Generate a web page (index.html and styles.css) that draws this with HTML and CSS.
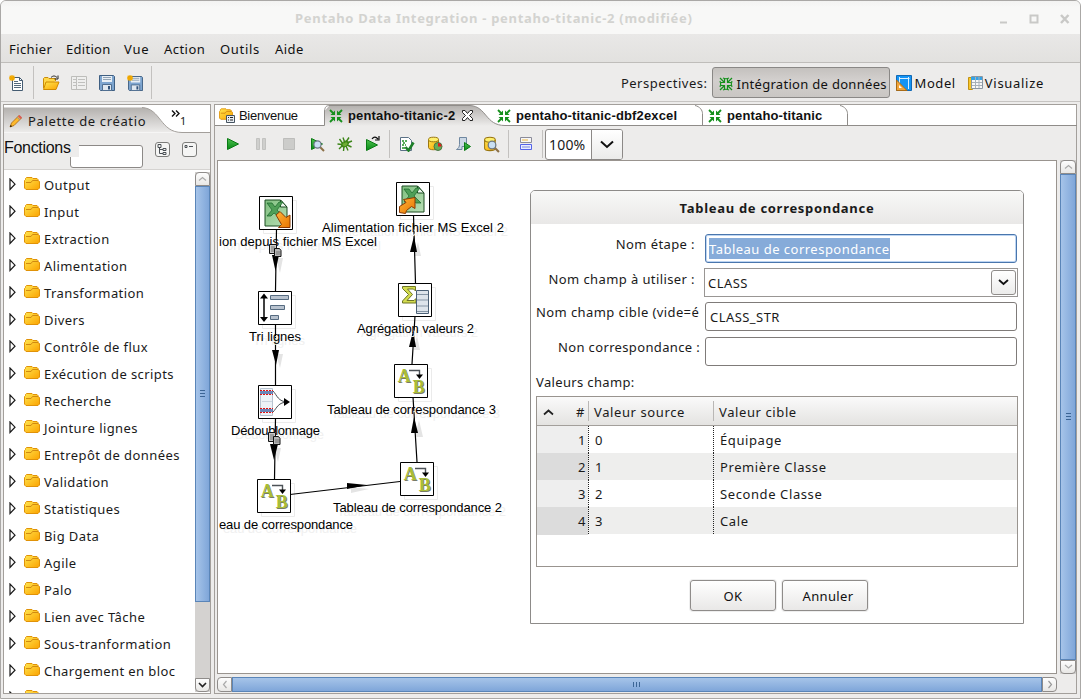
FILE: index.html
```html
<!DOCTYPE html>
<html lang="fr">
<head>
<meta charset="utf-8">
<title>Pentaho Data Integration</title>
<link rel="stylesheet" href="styles.css">
</head>
<body>
<svg class="defs" width="0" height="0">
  <defs>
    <linearGradient id="gold" x1="0" y1="0" x2="1" y2="1"><stop offset="0" stop-color="#ffe650"/><stop offset="1" stop-color="#fba300"/></linearGradient>
    <linearGradient id="play" x1="0" y1="0" x2="0" y2="1"><stop offset="0" stop-color="#4fc04f"/><stop offset="1" stop-color="#058a15"/></linearGradient>
    <linearGradient id="tabfill" x1="0" y1="0" x2="0" y2="1"><stop offset="0" stop-color="#b3b0ad"/><stop offset="1" stop-color="#edeceb"/></linearGradient>
    <linearGradient id="xls" x1="0" y1="0" x2="1" y2="1"><stop offset="0" stop-color="#7fbf7f"/><stop offset="1" stop-color="#b9dfb5"/></linearGradient>
    <linearGradient id="orange" x1="0" y1="0" x2="1" y2="1"><stop offset="0" stop-color="#ffb43a"/><stop offset="1" stop-color="#e87500"/></linearGradient>
    <symbol id="folder" viewBox="0 0 16 14"><path d="M.5 3.500V11l1.500 1.500h12l1.500-1.500V4.500L14 3.500V2.500L13 1.500H9L8 .5H2.500L1.500 1.500v1z" fill="url(#gold)" stroke="#e09208"/><path d="M2 5.500h5l1.500-2H14" fill="none" stroke="#d18a10"/></symbol>
    <symbol id="tri" viewBox="0 0 7 13"><path d="M1 1v10.500L6 6.200z" fill="#fff" stroke="#1a1a1a" stroke-width="1.200"/></symbol>
    <symbol id="run" viewBox="0 0 16 16"><path d="M2.500 2.500l11 5.500-11 5.500z" fill="url(#play)" stroke="#0a7a14"/></symbol>
    <symbol id="trans" viewBox="0 0 14 14"><path d="M1 1l4 4M13 1L9 5M1 13l4-4M13 13L9 9" stroke="#15901c" stroke-width="1.800"/><path d="M6 1.500V6H1.500zM8 1.500V6h4.500zM6 12.500V8H1.500zM8 12.500V8h4.500z" fill="#15901c"/></symbol>
    <symbol id="floppy" viewBox="0 0 16 16"><path d="M.5.5h14l1 1v14h-14l-1-1z" fill="#7ea5cf" stroke="#3f5f82"/><path d="M3 1h10v6H3z" fill="#e9eff5"/><path d="M4 2.500h8M4 4.500h8" stroke="#92a4b5"/><path d="M3.500 9.500h9v6h-9z" fill="#dfe7ef" stroke="#506e90"/><path d="M9 11h2v3.500H9z" fill="#315279"/></symbol>
    <symbol id="star" viewBox="0 0 6 6"><path d="M3 0v6M0 3h6M.7.700l4.600 4.600M5.300.7L.7 5.300" stroke="#f2a900" stroke-width="1.300"/></symbol>
    <symbol id="lens" viewBox="0 0 16 16"><path d="M11 11l4 4" stroke="#8c7046" stroke-width="2"/><circle cx="8.500" cy="8.500" r="3.600" fill="#c9dff3" stroke="#6c7885" stroke-width="1.200"/></symbol>
    <symbol id="db" viewBox="0 0 16 16"><path d="M1.500 3.500v8c0 3 10 3 10 0v-8" fill="url(#gold)" stroke="#9b7711"/><ellipse cx="6.500" cy="3.500" rx="5" ry="2.300" fill="#fff06c" stroke="#9b7711"/></symbol>
    <symbol id="map" viewBox="0 0 34 34"><path d="M.5.5h33v33H.5z" fill="#fff" stroke="#000"/><path d="M15 6.500h10.500V13" fill="none" stroke="#4c5257" stroke-width="1.400"/><path d="M22 10.500h7L25.500 15z"/><g font-family="Liberation Serif, serif" font-weight="bold" font-size="18"><text x="4.500" y="18.500" fill="#777b66">A</text><text x="19.500" y="30" fill="#777b66">B</text><text x="3.800" y="17.800" fill="#a9bd36">A</text><text x="18.800" y="29.300" fill="#a9bd36">B</text></g></symbol>
    <symbol id="excel" viewBox="0 0 24 28"><path d="M1 1h15.500l6.500 7v19H1z" fill="url(#xls)" stroke="#1d4c22"/><path d="M16.500 1v7H23z" fill="#eef6ee" stroke="#1d4c22"/><path d="M3 4h5l3 4 4-5h4l-6 8 7 7h-5l-5-4-3 3H3l5-6z" fill="#4f9f57" stroke="#19652a" stroke-width=".7"/></symbol>
    <symbol id="copy" viewBox="0 0 13 13"><path d="M.5.5h7v9h-7z" fill="#c9c9c9" stroke="#111"/><path d="M2 3h4M2 5h4M2 7h4" stroke="#777"/><path d="M5.500 4.500h5l1.500 2v6H5.500z" fill="#b7b7b7" stroke="#111"/><path d="M7 8h4M7 10h4" stroke="#777"/></symbol>
  </defs>
</svg>

<div class="window">
  <header class="titlebar">
    <span class="title">Pentaho Data Integration - pentaho-titanic-2 (modifiée)</span>
    <svg class="winctl" width="76" height="14" viewBox="0 0 76 14" fill="none" stroke="#c9c9c7"><path d="M1 10.500h7" stroke-width="2"/><path d="M31.500 3.500h7v7h-7z" stroke-width="2"/><path d="M62 3l7.500 8M69.500 3L62 11" stroke-width="2.500"/></svg>
  </header>

  <nav class="menubar">
    <span class="m1">Fichier</span><span class="m2">Edition</span><span class="m3">Vue</span><span class="m4">Action</span><span class="m5">Outils</span><span class="m6">Aide</span>
  </nav>

  <div class="toolbar">
    <svg class="ic new" width="16" height="16" viewBox="0 0 16 16"><path d="M3.500 2.500h7l3 3v10h-10z" fill="#fff" stroke="#455c72"/><path d="M10.500 2.500v3h3" fill="none" stroke="#455c72"/><path d="M5 6.500h4M5 8.500h7M5 10.500h7M5 12.500h7" stroke="#54697c"/><use href="#star" width="6" height="6"/></svg>
    <i class="sep"></i>
    <svg class="ic open" width="18" height="16" viewBox="0 0 18 16"><path d="M1.500 13V3.500l1-1H6l1 1h6.500V6" fill="#ffd84a" stroke="#c98c0c"/><path d="M1.500 14.500L4 7h13l-3 7.500z" fill="url(#gold)" stroke="#d08a00"/><path d="M9 2.500c2-2 4-2 6 0M16 .5v3.500h-3.500" fill="none" stroke="#222"/></svg>
    <svg class="ic" width="16" height="16" viewBox="0 0 16 16"><path d="M.5 1.500h15v13H.5z" fill="#efefee" stroke="#bdbdba"/><path d="M2 4.500h3M2 7.500h3M2 10.500h3M7 4.500h7M7 7.500h7M7 10.500h7M5.500 2v12" stroke="#c0c0be"/></svg>
    <svg class="ic" width="16" height="16"><use href="#floppy"/></svg>
    <svg class="ic" width="16" height="16" viewBox="0 0 16 16"><use href="#floppy" x="1" y="1" width="15" height="15"/><use href="#star" width="6" height="6"/></svg>
    <i class="sep last"></i>
    <span class="grow"></span>
    <span class="persp-label">Perspectives:</span>
    <button class="persp on"><svg width="14" height="14" viewBox="0 0 14 14" fill="none" stroke="#15901c" stroke-width="1.200"><path d="M1 1l4 4M13 1L9 5M1 13l4-4M13 13L9 9M5.500 2v3.500H2M8.500 2v3.500H12M5.500 12V8.500H2M8.500 12V8.500H12M1 4c1 2 1 4 0 6M13 4c-1 2-1 4 0 6M4 1c2 1 4 1 6 0M4 13c2-1 4-1 6 0"/></svg><span>Intégration de données</span></button>
    <span class="persp model"><svg width="16" height="16" viewBox="0 0 16 16"><path d="M.5.5h15v15H.5z" fill="#1494f5" stroke="#1269b4"/><path d="M3 3.500h10.500M3.500 2v12M12.500 2v12" stroke="#d9efff"/><path d="M.5 5v10.500H11z" fill="#f2a53b" stroke="#a96b17"/><path d="M3 10v3h3z" fill="#fff"/></svg>Model</span>
    <span class="persp visu"><svg width="15" height="14" viewBox="0 0 15 14"><path d="M.5 1.500h4v12h-4z" fill="#f8c62a" stroke="#c29212"/><path d="M3.500.5h11v12h-11z" fill="#f7f7f7" stroke="#8b97a2"/><path d="M3 1h11v3H3z" fill="#35a3e6"/><path d="M4 6.500h10M4 9.500h10M7.500 1v11M11 1v11" stroke="#a7b0b8"/></svg>Visualize</span>
  </div>

  <main class="work">
    <section class="palette">
      <div class="ptabs">
        <svg class="shape" width="206" height="28" viewBox="0 0 206 28"><path d="M0 27.500V2.500h138C157 3.500 156 27.500 178 27.500z" fill="url(#tabfill)"/><path d="M138 2.500C157 3.500 156 27.500 178 27.500H206" fill="none" stroke="#a39f9b"/></svg>
        <svg class="pencil" width="14" height="14" viewBox="0 0 14 14"><path d="M1 13l1.500-4L10 1.500 12.500 4 5 11.500z" fill="#fdb92c" stroke="#a8660f" stroke-width=".8"/><path d="M9 2.500l1.500-1.500L13 3.500 11.500 5z" fill="#d95b5b"/><path d="M8.200 3.300l2.500 2.500" stroke="#7d8fb5"/><path d="M1 13l.8-2 1.200 1.200z"/></svg>
        <span class="pname">Palette de créatio</span>
        <svg class="more" width="9" height="8" viewBox="0 0 9 8" fill="none" stroke="#111" stroke-width="1.400"><path d="M1 .5l3 3-3 3M5 .5l3 3-3 3"/></svg><span class="one">1</span>
      </div>
      <div class="pfilter">
        <span class="flabel">Fonctions</span>
        <span class="finput"></span>
        <svg class="tbtn a" width="15" height="15" viewBox="0 0 15 15" fill="none" stroke="#7c7c7a"><rect x=".5" y=".5" width="14" height="14" rx="2.500" fill="#f5f5f4"/><path d="M3 2.500h3v3H3zM8 6.500h3v2H8zM8 10.500h3v2H8zM4.500 6v5.500H8M4.500 7.500H8" stroke="#4b5055"/></svg>
        <svg class="tbtn" width="15" height="15" viewBox="0 0 15 15" fill="none" stroke="#7c7c7a"><rect x=".5" y=".5" width="14" height="14" rx="2.500" fill="#f5f5f4"/><path d="M3 3.500h2v2H3zM7 4.500h4" stroke="#4b5055"/></svg>
      </div>
      <div class="ptree">
        <ul class="tree">
          <li><svg class="tw"><use href="#tri"/></svg><svg class="fo"><use href="#folder"/></svg>Output</li>
          <li><svg class="tw"><use href="#tri"/></svg><svg class="fo"><use href="#folder"/></svg>Input</li>
          <li><svg class="tw"><use href="#tri"/></svg><svg class="fo"><use href="#folder"/></svg>Extraction</li>
          <li><svg class="tw"><use href="#tri"/></svg><svg class="fo"><use href="#folder"/></svg>Alimentation</li>
          <li><svg class="tw"><use href="#tri"/></svg><svg class="fo"><use href="#folder"/></svg>Transformation</li>
          <li><svg class="tw"><use href="#tri"/></svg><svg class="fo"><use href="#folder"/></svg>Divers</li>
          <li><svg class="tw"><use href="#tri"/></svg><svg class="fo"><use href="#folder"/></svg>Contrôle de flux</li>
          <li><svg class="tw"><use href="#tri"/></svg><svg class="fo"><use href="#folder"/></svg>Exécution de scripts</li>
          <li><svg class="tw"><use href="#tri"/></svg><svg class="fo"><use href="#folder"/></svg>Recherche</li>
          <li><svg class="tw"><use href="#tri"/></svg><svg class="fo"><use href="#folder"/></svg>Jointure lignes</li>
          <li><svg class="tw"><use href="#tri"/></svg><svg class="fo"><use href="#folder"/></svg>Entrepôt de données</li>
          <li><svg class="tw"><use href="#tri"/></svg><svg class="fo"><use href="#folder"/></svg>Validation</li>
          <li><svg class="tw"><use href="#tri"/></svg><svg class="fo"><use href="#folder"/></svg>Statistiques</li>
          <li><svg class="tw"><use href="#tri"/></svg><svg class="fo"><use href="#folder"/></svg>Big Data</li>
          <li><svg class="tw"><use href="#tri"/></svg><svg class="fo"><use href="#folder"/></svg>Agile</li>
          <li><svg class="tw"><use href="#tri"/></svg><svg class="fo"><use href="#folder"/></svg>Palo</li>
          <li><svg class="tw"><use href="#tri"/></svg><svg class="fo"><use href="#folder"/></svg>Lien avec Tâche</li>
          <li><svg class="tw"><use href="#tri"/></svg><svg class="fo"><use href="#folder"/></svg>Sous-tranformation</li>
          <li><svg class="tw"><use href="#tri"/></svg><svg class="fo"><use href="#folder"/></svg>Chargement en bloc</li>
          <li><svg class="tw"><use href="#tri"/></svg><svg class="fo"><use href="#folder"/></svg>Petits</li>
        </ul>
        <div class="vscroll">
          <span class="arrow"><svg width="9" height="6" viewBox="0 0 9 6" fill="none" stroke="#aaa" stroke-width="1.200"><path d="M1 4.500l3.500-3 3.500 3"/></svg></span>
          <span class="thumb"><svg width="5" height="8" viewBox="0 0 5 8" stroke="#3c6595"><path d="M0 .5h5M0 3.500h5M0 6.500h5"/></svg></span>
          <span class="arrow end"><svg width="9" height="6" viewBox="0 0 9 6" fill="none" stroke="#222" stroke-width="1.600"><path d="M1 1l3.500 3.500L8 1"/></svg></span>
        </div>
      </div>
    </section>

    <section class="editor">
      <div class="etabs">
        <svg class="shape" width="862" height="21" viewBox="0 0 862 21"><path d="M109.500 21V6l5-5.500H255C272 1.500 270 20.500 290 20.500V21z" fill="url(#tabfill)"/><g fill="none" stroke="#8f8c89"><path d="M0 20.500h109.500V6C110 2 111 .5 115 .5H255C272 1.500 270 20.500 290 20.500H862"/><path d="M480 .5c5 1 7.500 5 7.500 8v12M625 .5c5 1 7.500 5 7.500 8v12"/></g></svg>
        <span class="tab t1"><svg width="16" height="16" viewBox="0 0 16 16"><use href="#folder" width="14" height="13"/><path d="M7.500 7.500h8v7h-8z" fill="#e8eef4" stroke="#44525f"/><path d="M9 9.500h1M9 12h1M11 9.500h3M11 12h3" stroke="#222"/></svg><span>Bienvenue</span></span>
        <span class="tab t2"><svg width="14" height="14"><use href="#trans"/></svg><b>pentaho-titanic-2</b><svg class="close" width="11" height="11" viewBox="0 0 11 11"><path d="M.5.5h2.500l2.500 3 2.500-3h2.500v2l-3 3 3 3v2H8l-2.500-3-2.500 3H.5v-2l3-3-3-3z" fill="#fff" stroke="#222"/></svg></span>
        <span class="tab t3"><svg width="14" height="14"><use href="#trans"/></svg><b>pentaho-titanic-dbf2excel</b></span>
        <span class="tab t4"><svg width="14" height="14"><use href="#trans"/></svg><b>pentaho-titanic</b></span>
      </div>
      <div class="ebar">
        <svg width="16" height="16"><use href="#run"/></svg>
        <svg width="16" height="16" viewBox="0 0 16 16"><path d="M3.500 2.500h3v11h-3zM9.500 2.500h3v11h-3z" fill="#cfcfcd" stroke="#c2c2c0"/></svg>
        <svg width="16" height="16" viewBox="0 0 16 16"><path d="M2.500 2.500h11v11h-11z" fill="#ccccca" stroke="#bdbdbb"/></svg>
        <svg width="16" height="16" viewBox="0 0 16 16"><path d="M2.500 2.500l11 5.500-11 5.500z" fill="url(#play)" stroke="#0a7a14"/><use href="#lens"/></svg>
        <svg width="16" height="16" viewBox="0 0 16 16"><ellipse cx="8" cy="8" rx="4" ry="2.600" transform="rotate(-35 8 8)" fill="#6fae34" stroke="#33750f" stroke-width=".7"/><path d="M6 8L2.500 3M8 7L6 1.500M9 6l3-4.500M10 7l5-2M10 9l4.500 2M9 10l2 4.500M7 10l-.5 5M6 9l-4 4M5 8.500L.5 8" fill="none" stroke="#3d8518" stroke-width="1.400"/></svg>
        <svg width="16" height="16" viewBox="0 0 16 16"><path d="M1.500 3.500l11 5.500-11 5.500z" fill="url(#play)" stroke="#0a7a14"/><path d="M7 3c2-3 4-2 6 0M14 0v4h-4" fill="none" stroke="#111" stroke-width="1.200"/></svg>
        <i class="sep"></i>
        <svg width="16" height="16" viewBox="0 0 16 16"><path d="M1.500 1.500h8l3 3v10h-11z" fill="#fff" stroke="#5b7186"/><path d="M3 5h2M6 5h2M4 7h2M3 9h2M6 9h1M3 12h3" stroke="#259325" stroke-width="1.500"/><path d="M6.500 11l3 3.500 5-8" fill="none" stroke="#1d7f28" stroke-width="2.600"/></svg>
        <svg width="16" height="16" viewBox="0 0 16 16"><use href="#db"/><circle cx="11" cy="10.500" r="4" fill="#68ae5b" stroke="#497542"/><path d="M11 10.500V7a3.500 3.500 0 0 1 3.500 3.500z" fill="#e21d1d"/></svg>
        <svg width="16" height="16" viewBox="0 0 16 16"><path d="M4.500 1.500h7v9H7v3H1.500c2-1 3-3 3-5z" fill="#ccd8e5" stroke="#6f87a0"/><path d="M9.500 6.500l6 4-6 4z" fill="url(#play)" stroke="#0a7a14"/></svg>
        <svg width="17" height="17" viewBox="0 0 16 16"><use href="#db"/><use href="#lens"/></svg>
        <i class="sep"></i>
        <svg width="16" height="16" viewBox="0 0 16 16"><path d="M2.500 1.500h11v5h-11z" fill="#f7f7f7" stroke="#8b8b99"/><path d="M4 4h6" stroke="#eeb73c"/><path d="M2.500 8.500h11v5h-11z" fill="#e8ecff" stroke="#5563e8"/><path d="M4 11h8" stroke="#7b87dd"/></svg>
        <i class="sep"></i>
        <span class="zoom"><span class="zval">100%</span><span class="zbtn"><svg width="14" height="9" viewBox="0 0 14 9" fill="none" stroke="#111" stroke-width="2"><path d="M1 1.500l6 5.500 6-5.500"/></svg></span></span>
      </div>
      <div class="egrid">
        <div class="canvas">
          <svg class="graph" width="838" height="512" viewBox="218 161 838 512">
            <path class="shadow" transform="translate(4 4)" d="M259.500 196.500h33v33h-33zM258.500 291.500h33v33h-33zM258.500 385.500h33v33h-33zM257.500 479.500h33v33h-33zM396.500 182.500h33v33h-33zM398.500 283.500h33v33h-33zM394.500 364.500h33v33h-33zM400.500 462.500h33v33h-33z"/>
            <path class="wedge" transform="translate(4 4)" d="M272 254h7l-3 15zM272 350h7l-3 14zM270 444h7l-3 14zM347 483v6l18-4zM410 252h7l-3-14zM409 346h7l-3-14zM411 433h8l-4-17z"/>
            <g class="hop"><path d="M276.500 229l-1 62M275.500 324v61M275.500 418l-1 61M290 494.500L400 481.500M417 462l-4-65M412 364l3-48M415.500 283l-2-68"/></g>
            <path d="M272 255h7l-3.500 16zM272 350h7l-3 15zM270 444h8l-4 16zM347 483v6l20-4zM410 252h7l-3-16zM409 347h7l-3-16zM411 433h7l-4-16z"/>
            <g class="lbl"><text x="219" y="246" textLength="158">ion depuis fichier MS Excel</text><text x="249" y="341" textLength="52">Tri lignes</text><text x="231" y="435" textLength="89">Dédoublonnage</text><text x="219" y="529" textLength="134">eau de correspondance</text><text x="322" y="232" textLength="182">Alimentation fichier MS Excel 2</text><text x="357" y="333" textLength="117">Agrégation valeurs 2</text><text x="327" y="414" textLength="169">Tableau de correspondance 3</text><text x="333" y="512" textLength="169">Tableau de correspondance 2</text></g>
            <use href="#copy" x="269" y="244" width="13" height="13"/><use href="#copy" x="268" y="432" width="13" height="13"/>
            <path class="node" d="M259.500 196.500h33v33h-33zM258.500 291.500h33v33h-33zM258.500 385.500h33v33h-33zM396.500 182.500h33v33h-33zM398.500 283.500h33v33h-33z"/>
            <use href="#map" x="257" y="479" width="34" height="34"/><use href="#map" x="400" y="462" width="34" height="34"/><use href="#map" x="394" y="364" width="34" height="34"/>
            <use href="#excel" x="264" y="199" width="24" height="28"/><path d="M276 215l4-3.500 6 6 4-2.500v12.500H278.500l3-3z" fill="url(#orange)" stroke="#8a3a05"/>
            <use href="#excel" x="401" y="185" width="24" height="28"/><path d="M403.500 199.500l11.500-2v11l-3.500-2-5 4-1 3-6-1v-6l6.500-4z" fill="url(#orange)" stroke="#8a3a05"/>
            <g><path d="M264 297v22" stroke="#000" stroke-width="1.500"/><path d="M260 298.500h8l-4-5zM260 317h8l-4 5z"/><path d="M270.500 295.500h18v4h-18zM270.500 305.500h14v4h-14zM270.500 315.500h8v4h-8z" fill="#b9c3cf" stroke="#566b80"/></g>
            <g fill="none"><path d="M260.500 388.500h12v27h-12z" fill="#edf2f7" stroke="#b7c3d0"/><path d="M260 392.500h13M260 410.500h13" stroke="#6a86b8" stroke-width="3"/><path d="M260 390.500h13M260 394.500h13M260 408.500h13M260 412.500h13" stroke="#e01212" stroke-dasharray="2 1"/><path d="M262 401.500h10" stroke="#cbd5df"/><path d="M273 391c4 4 5 11 15 11M273 412c4-4 5-10 15-10" stroke="#4a4f53"/><path d="M284 398l6 4-6 4z" fill="#000"/></g>
            <g><path d="M402.500 286.500H415.500v4.500l-2-2h-6l5 5.500-5.500 6h7l2-2v4.500H402.500v-2l6-6.500-6-6z" fill="#d3dc4f" stroke="#6d7523"/><path d="M416.500 290.500h12v23h-12z" fill="#dde4eb" stroke="#4b6076"/><path d="M417 294.500h11M417 300h11M417 306h11M417 311.500h11" stroke="#8595a5"/></g>
          </svg>

          <div class="dialog">
            <div class="dtitle">Tableau de correspondance</div>
            <div class="form">
              <label class="f1">Nom étape :</label><div class="inp focus"><span>Tableau de correspondance</span></div>
              <label class="f2">Nom champ à utiliser :</label><div class="combo"><span>CLASS</span><i><svg width="11" height="7" viewBox="0 0 11 7" fill="none" stroke="#111" stroke-width="1.800"><path d="M1 1l4.500 4L10 1"/></svg></i></div>
              <label class="f3">Nom champ cible (vide=é</label><div class="inp"><span>CLASS_STR</span></div>
              <label class="f4">Non correspondance :</label><div class="inp"></div>
            </div>
            <div class="vlabel">Valeurs champ:</div>
            <div class="grid">
              <div class="ghead"><span class="c0"><svg width="11" height="7" viewBox="0 0 11 7" fill="none" stroke="#222" stroke-width="1.700"><path d="M1 5.500l4.500-4 4.500 4"/></svg>#</span><span class="c1">Valeur source</span><span class="c2">Valeur cible</span></div>
              <div class="grow-r"><span class="c0">1</span><span class="c1">0</span><span class="c2">Équipage</span></div>
              <div class="grow-r alt"><span class="c0">2</span><span class="c1">1</span><span class="c2">Première Classe</span></div>
              <div class="grow-r"><span class="c0">3</span><span class="c1">2</span><span class="c2">Seconde Classe</span></div>
              <div class="grow-r alt"><span class="c0">4</span><span class="c1">3</span><span class="c2">Cale</span></div>
            </div>
            <div class="buttons"><button>OK</button><button class="cancel">Annuler</button></div>
          </div>
        </div>
        <div class="vscroll main">
          <span class="arrow"><svg width="9" height="6" viewBox="0 0 9 6" fill="none" stroke="#aaa" stroke-width="1.200"><path d="M1 4.500l3.500-3 3.500 3"/></svg></span>
          <span class="thumb"><svg width="5" height="8" viewBox="0 0 5 8" stroke="#3c6595"><path d="M0 .5h5M0 3.500h5M0 6.500h5"/></svg></span>
          <span class="arrow end"><svg width="9" height="6" viewBox="0 0 9 6" fill="none" stroke="#aaa" stroke-width="1.200"><path d="M1 1l3.500 3L8 1"/></svg></span>
        </div>
        <div class="hscroll">
          <span class="arrow"><svg width="6" height="9" viewBox="0 0 6 9" fill="none" stroke="#aaa" stroke-width="1.200"><path d="M4.500 1l-3 3.500 3 3.500"/></svg></span>
          <span class="thumb"><svg width="8" height="5" viewBox="0 0 8 5" stroke="#3c6595"><path d="M.5 0v5M3.500 0v5M6.500 0v5"/></svg></span>
          <span class="arrow end"><svg width="6" height="9" viewBox="0 0 6 9" fill="none" stroke="#999" stroke-width="1.200"><path d="M1.500 1l3 3.500-3 3.500"/></svg></span>
        </div>
      </div>
    </section>
  </main>
</div>
</body>
</html>
```

FILE: styles.css
```css
* { box-sizing: border-box; }
body { margin: 0; background: #fff; font: 13px/18px "Noto Sans", sans-serif; letter-spacing: .45px; color: #1a1a1a; overflow: hidden; }
svg { display: block; flex: none; }
.defs { position: absolute; }
.window { width: 1081px; height: 699px; border: 1px solid #aaa8a6; border-radius: 6px 6px 0 0; background: #edeceb; display: flex; flex-direction: column; overflow: hidden; white-space: nowrap; }

.titlebar { height: 33px; flex: none; background: linear-gradient(#f3f3f2, #f8f8f7 20%, #f8f8f7); display: flex; align-items: center; justify-content: space-between; padding: 2px 5px 0 294px; color: #d3d3d0; font-weight: bold; }
.title { letter-spacing: .7px; margin-top: -2px; }
.menubar { height: 29px; flex: none; display: flex; padding: 6px 0 0 8px; background: linear-gradient(#e9e8e7, #e2e1df); border-bottom: 1px solid #bfbdba; color: #111; }
.menubar span { flex: none; }
.m1 { width: 57px; letter-spacing: .4px; } .m2 { width: 58px; letter-spacing: .3px; } .m3 { width: 40px; letter-spacing: .8px; } .m4 { width: 56px; } .m5 { width: 55px; letter-spacing: .7px; }

.toolbar { height: 39px; flex: none; display: flex; align-items: center; padding: 1px 36px 0 8px; border-bottom: 1px solid #c6c4c2; }
.toolbar .ic { margin-right: 12px; }
.toolbar .new { margin-right: 8px; }
.toolbar .open { margin: 0 11px 0 8px; }
.sep { width: 1px; height: 33px; background: #c3c1bf; flex: none; }
.toolbar .last { margin-left: -4px; }
.grow { flex: 1; }
.persp-label { margin-right: 5px; letter-spacing: .5px; }
.persp { display: flex; align-items: center; gap: 2px; font: inherit; letter-spacing: .5px; color: #111; }
.persp.on { width: 178px; height: 31px; border: 1px solid #8a8886; border-radius: 3px; background: linear-gradient(#c4c1be, #d2cfcd 40%, #c9c6c3); padding: 2px 0 0 6px; gap: 3px; letter-spacing: .3px; }
.model { margin-left: 6px; letter-spacing: .6px; }
.visu { margin-left: 12px; letter-spacing: .7px; }

.work { flex: 1; display: flex; padding: 2px 3px 4px 2px; gap: 3px; min-height: 0; }
.palette { width: 208px; border: 1px solid #a39f9b; display: flex; flex-direction: column; background: #edeceb; }
.ptabs { height: 28px; flex: none; background: #fff; position: relative; display: flex; align-items: center; padding: 4px 0 0 5px; }
.shape { position: absolute; left: 0; top: 0; }
.pencil, .pname, .more, .one { position: relative; }
.pname { margin-left: 5px; width: 136px; letter-spacing: .65px; }
.more { margin: -14px 0 0 7px; }
.one { font-size: 11px; line-height: 10px; }
.pfilter { height: 37px; flex: none; display: flex; align-items: flex-start; border-bottom: 1px solid #d5d3d1; }
.flabel { font: 16px/30px "Liberation Sans", sans-serif; letter-spacing: -.3px; width: 75px; height: 24px; background: #edeceb; z-index: 1; position: relative; color: #111; }
.finput { width: 73px; height: 23px; margin: 12px 0 0 -9px; border: 1px solid #8c8987; border-radius: 3px; background: #fff; }
.tbtn { margin: 9px 0 0 12px; }
.ptree { flex: 1; min-height: 0; display: flex; background: #fff; }
.tree { flex: 1; margin: 0; padding: 1px 0 0; list-style: none; overflow: hidden; }
.tree li { height: 27px; display: flex; align-items: center; padding-left: 5px; letter-spacing: .42px; }
.tw { width: 7px; height: 13px; margin: -1px 8px 0 0; }
.fo { width: 16px; height: 14px; margin: -1px 4px 0 0; }

.vscroll { width: 15px; margin: 2px 0 1px; background: #d4d2d0; display: flex; flex-direction: column; }
.arrow { flex: none; height: 14px; border: 1px solid #8f8c8a; border-radius: 4px 4px 0 0; background: linear-gradient(#fdfdfd, #e8e7e5); display: flex; align-items: center; justify-content: center; }
.arrow.end { border-radius: 0 0 4px 4px; margin-top: auto; }
.thumb { height: 416px; border: 1px solid #5a85b8; background: linear-gradient(90deg, #a6c4e9, #7fa6d9); display: flex; align-items: center; justify-content: center; }

.editor { flex: 1; border: 1px solid #a39f9b; display: flex; flex-direction: column; min-width: 0; }
.etabs { height: 21px; flex: none; background: #fff; position: relative; display: flex; color: #111; }
.tab { position: relative; display: flex; align-items: center; gap: 5px; }
.tab span { font: 13px/18px "Liberation Sans", sans-serif; letter-spacing: -.3px; }
.tab b { font: bold 13px/18px "Liberation Sans", sans-serif; letter-spacing: .15px; }
.t1 { padding-left: 4px; width: 114px; gap: 4px; }
.t2 { width: 168px; }
.t2 .close { margin-left: 2px; }
.t3 { width: 211px; }
.ebar { height: 34px; flex: none; display: flex; align-items: center; padding: 2px 0 0 10px; }
.ebar > svg { margin-right: 12px; }
.ebar .sep { height: 28px; margin: 0 9px 0 -4px; }
.zoom { display: flex; width: 78px; height: 31px; margin-left: -7px; border: 1px solid #8c8987; border-radius: 3px; background: #fff; overflow: hidden; }
.zval { width: 46px; border-right: 1px solid #8c8987; font-size: 14px; line-height: 29px; padding-left: 3px; letter-spacing: .2px; }
.zbtn { flex: 1; display: flex; align-items: center; justify-content: center; background: linear-gradient(#fff, #ebebea); }
.egrid { flex: 1; min-height: 0; display: grid; grid-template: 514px 15px / 840px 16px; gap: 3px; padding-left: 2px; }
.canvas { border: 1px solid #99948f; background: #fff; position: relative; overflow: hidden; }
.main { margin: 0; width: 16px; }
.main .thumb { flex: 1; }
.hscroll { display: flex; }
.hscroll .arrow { width: 15px; height: 15px; border-radius: 4px 0 0 4px; }
.hscroll .arrow.end { border-radius: 0 4px 4px 0; margin: 0; }
.hscroll .thumb { flex: 1; height: 15px; background: linear-gradient(#a6c4e9, #7fa6d9); }

.lbl { font: 13px "Liberation Sans", sans-serif; letter-spacing: 0; text-shadow: 4px 4px 0 #f0f0f0; }
.hop { stroke: #000; stroke-width: 1.2; fill: none; }
.node { fill: #fff; stroke: #000; }
.shadow { fill: none; stroke: #ebebeb; }
.wedge { fill: #e4e4e4; }

.dialog { position: absolute; left: 312px; top: 29px; width: 494px; height: 434px; border: 1px solid #8d8b89; border-radius: 5px 5px 0 0; background: #fff; overflow: hidden; }
.dtitle { height: 33px; background: linear-gradient(#f8f8f7, #e9e8e7); font-weight: bold; text-align: center; line-height: 34px; letter-spacing: .7px; }
.form { display: grid; grid-template-columns: 168px 313px; grid-template-rows: 31px 29px 31px 31px; row-gap: 4px; padding: 9px 0 0 5px; }
.form label { text-align: right; padding: 2px 9px 0 0; letter-spacing: .4px; }
.form .f3, .form .f4 { padding-right: 4px; letter-spacing: .35px; }
.form .f3 { text-align: left; padding-right: 0; letter-spacing: .4px; }
.inp { border: 1px solid #7f7b79; border-radius: 3px; padding: 5px 4px; margin: 1px 0 1px 1px; }
.inp.focus { border-color: #4a76ad; box-shadow: inset 0 0 0 1px #bdd5f2; padding: 3px; }
.inp.focus span { display: inline-block; height: 21px; line-height: 22px; background: #86abd9; color: #fff; letter-spacing: .48px; }
.combo { border: 1px solid #999694; display: flex; justify-content: space-between; padding: 1px 1px 1px 3px; align-items: center; margin-right: -1px; }
.combo i { width: 25px; height: 25px; border: 1px solid #8f8c8a; border-radius: 3px; background: linear-gradient(#fff, #ececeb); display: flex; align-items: center; justify-content: center; }
.vlabel { padding: 6px 0 0 5px; height: 29px; letter-spacing: .35px; }
.grid { margin: 0 5px; height: 171px; border: 1px solid #99948f; }
.ghead, .grow-r { display: grid; grid-template-columns: 51px 125px 1fr; }
.ghead { height: 29px; line-height: 30px; background: linear-gradient(#fafafa, #e4e3e1); border-bottom: 1px solid #a39f9b; letter-spacing: .6px; }
.ghead .c0 { display: flex; align-items: center; justify-content: space-between; padding: 0 3px 0 6px; }
.ghead .c1, .ghead .c2 { background: linear-gradient(#b9b7b5, #b9b7b5) 0 4px / 1px 20px no-repeat; padding-left: 6px; }
.grow-r { height: 27px; line-height: 28px; letter-spacing: .6px; }
.grow-r .c0 { text-align: right; padding-right: 2px; background: #eee; }
.grow-r .c1, .grow-r .c2 { padding-left: 7px; background: repeating-linear-gradient(#222 0 1px, transparent 1px 2px) 0 0 / 1px 100% no-repeat; }
.alt { background: #eeeeed; }
.alt .c0 { background: #dcdcdc; }
.buttons { display: flex; gap: 6px; padding: 13px 0 0 159px; }
.buttons button { width: 86px; height: 31px; border: 1px solid #8f8c8a; border-radius: 3px; background: linear-gradient(#fff, #e9e8e7); font: inherit; letter-spacing: .35px; color: #111; padding: 0; box-shadow: 0 0 0 1px #eee; }
.cancel { text-indent: 6px; }
```
